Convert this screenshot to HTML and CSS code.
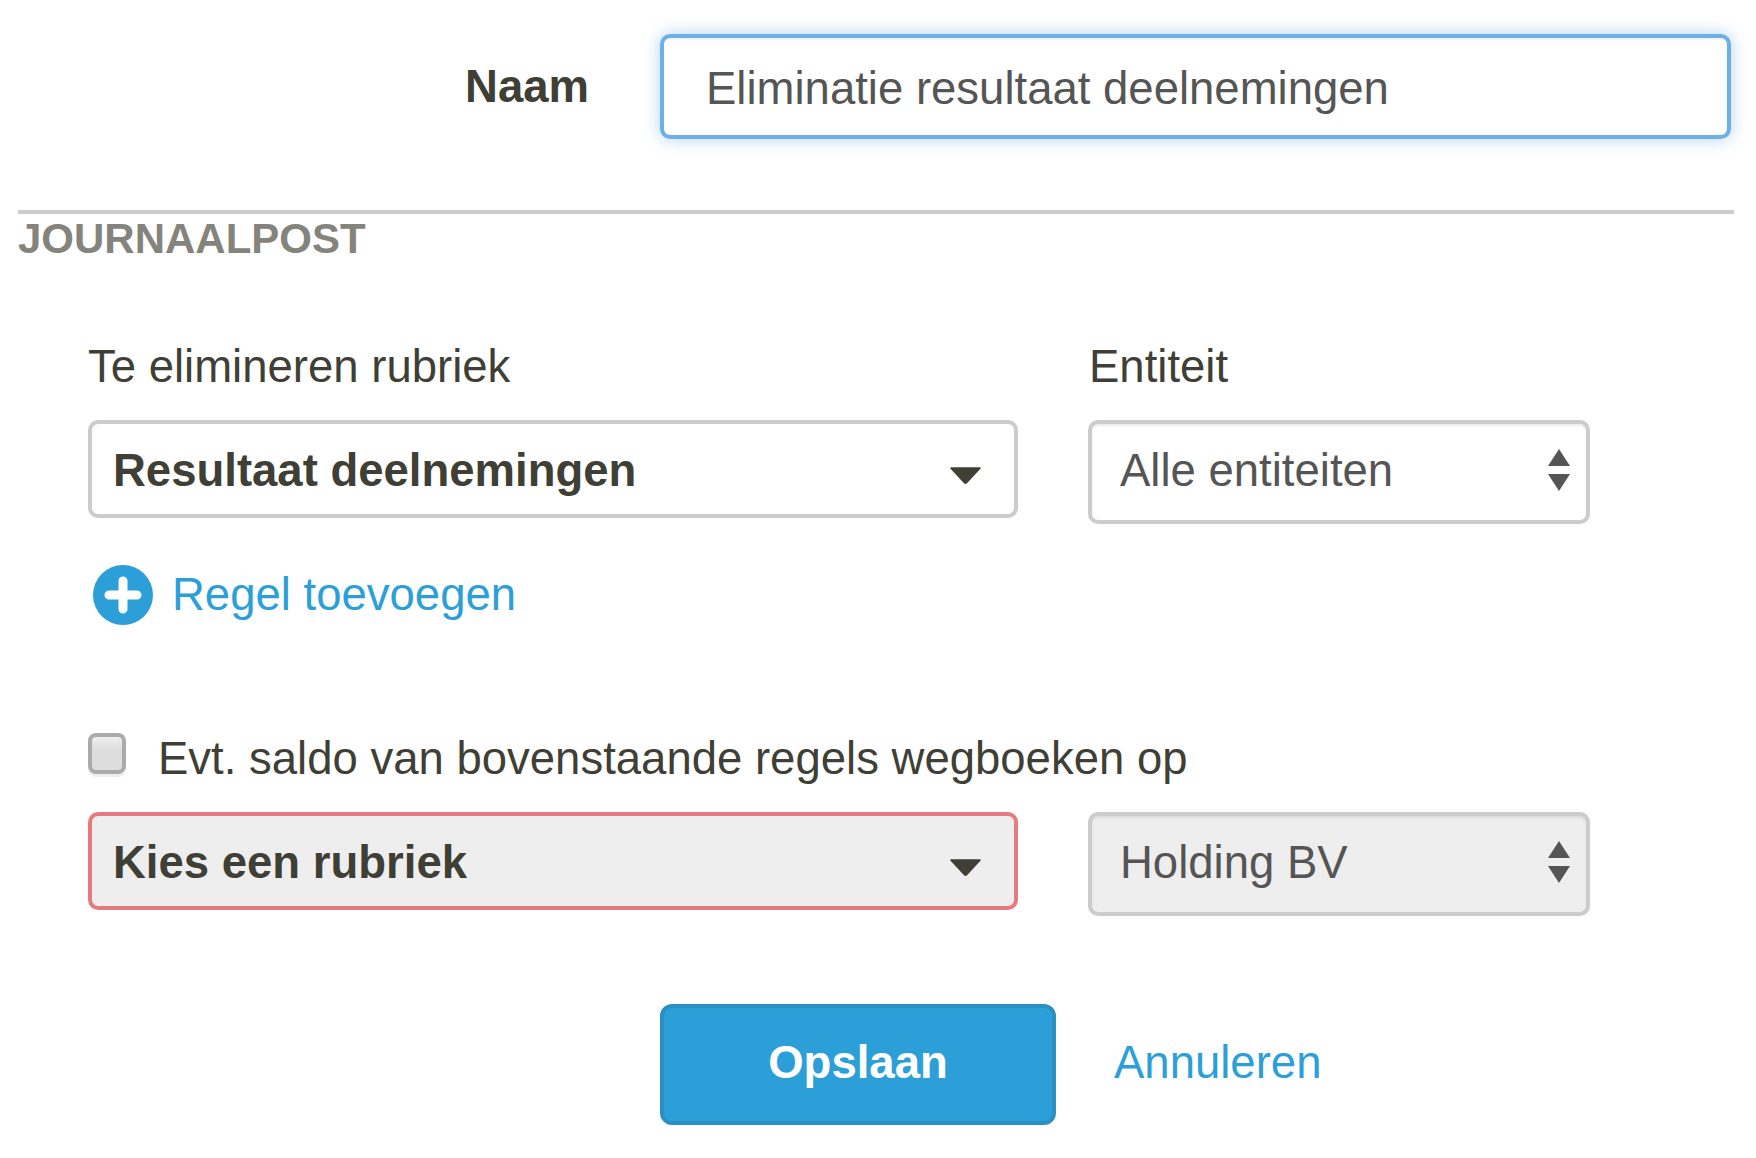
FILE: index.html
```html
<!DOCTYPE html>
<html lang="en">
<head>
    <meta charset="UTF-8">
    <title>Eliminatie</title>
    <link rel="stylesheet" href="styles.css">
</head>
<body>
    <div class="container">
        <div class="name-row">
            <label class="name-label">Naam</label>
            <div class="name-input">Eliminatie resultaat deelnemingen</div>
        </div>

        <div class="section-title">JOURNAALPOST</div>

        <div class="journal">
            <div class="fields labels">
                <div class="col-main">Te elimineren rubriek</div>
                <div class="col-side">Entiteit</div>
            </div>
            <div class="fields">
                <div class="col-main select2">
                    <span>Resultaat deelnemingen</span>
                    <svg class="caret" width="33" height="19" viewBox="0 0 32 18"><path d="M2 1H30Q31.500 1 30.500 2.500L17.500 16.500Q16 18 14.500 16.500L1.500 2.500Q.5 1 2 1Z"/></svg>
                </div>
                <div class="col-side select">
                    <span>Alle entiteiten</span>
                    <svg class="updown" width="22" height="44" viewBox="0 0 22 42"><path d="M11 0L22 17H0ZM0 25H22L11 42Z"/></svg>
                </div>
            </div>

            <a class="add-line">
                <svg width="60" height="60" viewBox="0 0 60 60"><circle cx="30" cy="30" r="30" fill="#2c9fd8"/><path d="M30 16V44M16 30H44" stroke="#fff" stroke-width="9" stroke-linecap="round"/></svg>
                <span>Regel toevoegen</span>
            </a>

            <div class="check-row">
                <span class="checkbox"></span>
                <span>Evt. saldo van bovenstaande regels wegboeken op</span>
            </div>

            <div class="fields">
                <div class="col-main select2 disabled error">
                    <span>Kies een rubriek</span>
                    <svg class="caret" width="33" height="19" viewBox="0 0 32 18"><path d="M2 1H30Q31.500 1 30.500 2.500L17.500 16.500Q16 18 14.500 16.500L1.500 2.500Q.5 1 2 1Z"/></svg>
                </div>
                <div class="col-side select disabled">
                    <span>Holding BV</span>
                    <svg class="updown" width="22" height="44" viewBox="0 0 22 42"><path d="M11 0L22 17H0ZM0 25H22L11 42Z"/></svg>
                </div>
            </div>
        </div>

        <div class="actions">
            <button class="btn">Opslaan</button>
            <a class="cancel">Annuleren</a>
        </div>
    </div>
</body>
</html>
```

FILE: styles.css
```css
*{
    margin: 0;
    padding: 0;
    box-sizing: border-box;
}
body{
    background-color: #fff;
    font-family: "Liberation Sans", Arial, sans-serif;
    font-size: 45.5px;
    color: #403f36;
}
.container{
    width: 1756px;
    height: 1158px;
    padding: 34px 22px 0 18px;
    overflow: hidden;
}
.name-row{
    display: flex;
    align-items: center;
}
.name-label{
    width: 571px;
    text-align: right;
    font-weight: 700;
}
.name-input{
    margin-left: 71px;
    width: 1071px;
    height: 105px;
    padding: 3px 0 0 42px;
    line-height: 96px;
    border: 4px solid #6bb0e8;
    border-radius: 10px;
    box-shadow: 0 0 16px rgba(107,176,232,.55), inset 0 2px 2px rgba(0,0,0,.06);
    color: #555;
}
.section-title{
    margin-top: 71px;
    border-top: 4px solid #ccc;
    font-size: 42px;
    line-height: 50px;
    font-weight: 700;
    color: #85847c;
}
.journal{
    padding-left: 70px;
}
.fields{
    display: flex;
    align-items: flex-start;
}
.labels{
    margin-top: 78px;
    margin-bottom: 28px;
    line-height: 50px;
}
.col-main{
    width: 930px;
    margin-right: 70px;
}
.col-side{
    width: 502px;
}
.labels .col-side{
    padding-left: 1px;
}
.select2, .select{
    display: flex;
    align-items: center;
    justify-content: space-between;
    border: 4px solid #ccc;
    border-radius: 10px;
    background-color: #fff;
}
.select2{
    height: 98px;
    padding: 0 32px 0 21px;
    font-weight: 700;
}
.select2 span{
    padding-top: 4px;
}
.select{
    height: 104px;
    padding: 0 16px 0 28px;
    color: #555;
    box-shadow: inset 0 2px 2px rgba(0,0,0,.08);
}
.select span{
    padding-bottom: 2px;
}
.disabled{
    background-color: #eee;
}
.error{
    border-color: #e57b7e;
}
.caret{
    fill: #403f36;
    margin-top: 12px;
}
.updown{
    fill: #555;
    margin-bottom: 4px;
}
.add-line{
    display: flex;
    align-items: center;
    gap: 19px;
    margin-top: 41px;
    margin-left: 5px;
    color: #2c9fd8;
}
.check-row{
    display: flex;
    align-items: center;
    gap: 32px;
    margin-top: 109px;
    margin-bottom: 28px;
    height: 50px;
}
.checkbox{
    width: 38px;
    height: 41px;
    margin-top: -12px;
    border: 4px solid #aaa;
    border-radius: 8px;
    background-image: linear-gradient(#eee, #ddd 40%);
    box-shadow: 0 3px 0 #eee;
}
.actions{
    display: flex;
    align-items: center;
    gap: 58px;
    margin-top: 88px;
    margin-left: 642px;
}
.btn{
    width: 396px;
    height: 121px;
    padding-bottom: 4px;
    border: 4px solid #2a8fc2;
    border-radius: 12px;
    background-color: #2c9fd8;
    color: #fff;
    font-family: inherit;
    font-size: 45.5px;
    font-weight: 700;
}
.cancel{
    margin-bottom: 4px;
    color: #2c9fd8;
}
```
